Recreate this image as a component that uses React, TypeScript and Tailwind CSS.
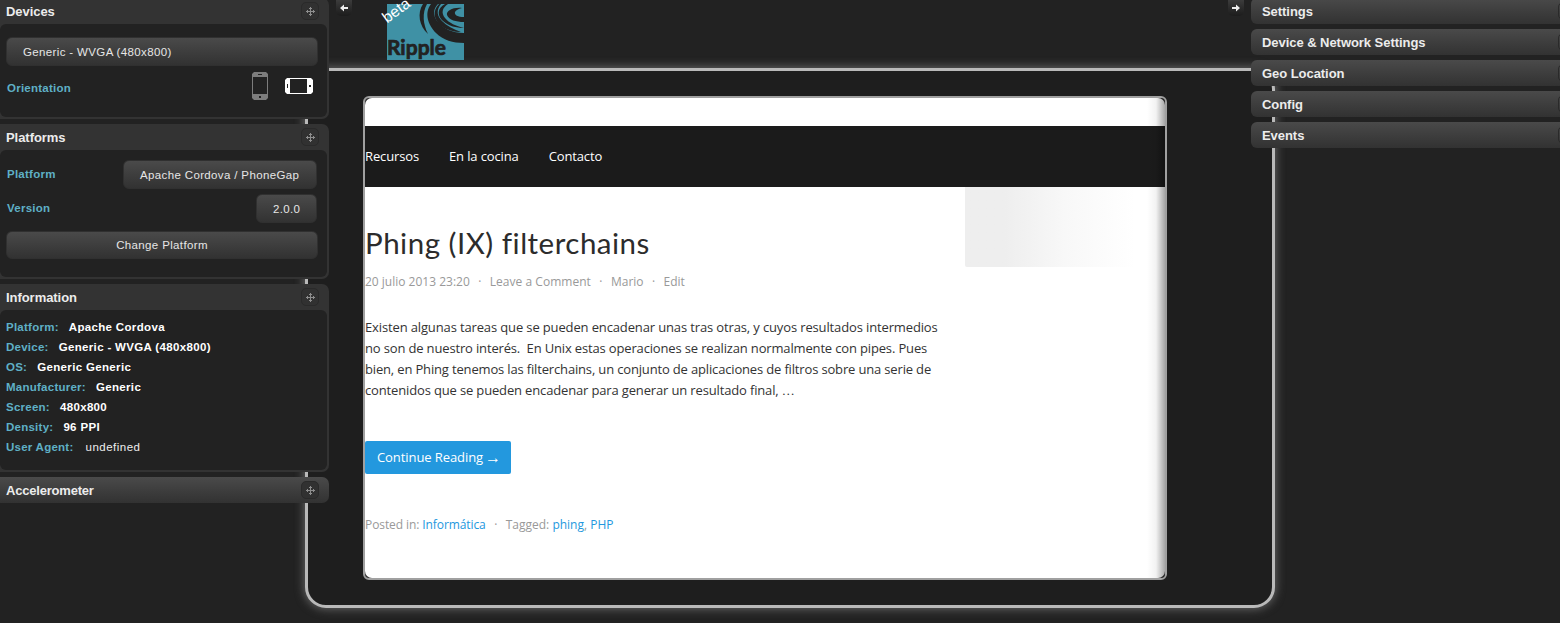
import React from "react";

const sans = "font-['Liberation_Sans',Arial,sans-serif]";

function MoveIcon() {
  return (
    <span className="flex h-[18px] w-[18px] items-center justify-center rounded-[5px] border border-[#2a2a2a] bg-[#313131]">
      <svg width="10" height="10" viewBox="0 0 10 10" fill="#8e8e8e" shapeRendering="crispEdges">
        <path d="M5 1h1v9H5zM1 5h9v1H1zM4 2h3v1H4zM4 8h3v1H4zM2 4h1v3H2zM8 4h1v3H8z" />
      </svg>
    </span>
  );
}

const heading = "pt-[2px] text-[13px] leading-[20px] font-bold tracking-[-0.05px] text-[#ececec]";

function Panel({ title, height, children }: { title: string; height: string; children: React.ReactNode }) {
  return (
    <section className={`flex w-[329px] flex-col rounded-r-[7px] bg-[#333333] pr-[2px] pb-[2px] ${height}`}>
      <header className="flex h-[26px] shrink-0 items-center justify-between pr-[8px] pl-[6px]">
        <h2 className={heading}>{title}</h2>
        <MoveIcon />
      </header>
      <div className="grow rounded-[6px] bg-[#222222]">{children}</div>
    </section>
  );
}

const button =
  "flex items-center rounded-[6px] border border-[#303030] bg-linear-to-b from-[#4a4a4a] to-[#323232] pt-[2px] text-[11.5px] text-[#e6e6e6] tracking-[0.36px] whitespace-nowrap";
const label = "text-[11.5px] font-bold text-[#5fb0c6] tracking-[0.25px]";

const info = [
  ["Platform:", "Apache Cordova"],
  ["Device:", "Generic - WVGA (480x800)"],
  ["OS:", "Generic Generic"],
  ["Manufacturer:", "Generic"],
  ["Screen:", "480x800"],
  ["Density:", "96 PPI"],
];

function LeftSidebar() {
  return (
    <aside className="z-10 col-start-1 row-start-1 -mt-[2px] flex flex-col gap-[5px]">
      <Panel title="Devices" height="h-[121px]">
        <div className="flex flex-col px-[6px] pt-[13px]">
          <div className={`${button} h-[29px] w-[312px] pl-4`}>Generic - WVGA (480x800)</div>
          <div className="flex h-[40px] w-[310px] items-center pl-px">
            <span className={`${label} grow pt-[5px] tracking-[0.18px]`}>Orientation</span>
            <svg width="16" height="28" viewBox="0 0 16 28">
              <path fill="#7d7d7d" fillRule="evenodd" d="M2 0h12l2 2v24l-2 2H2l-2-2V2zM1 5v17h14V5zM6 2v1h4V2zM7 24v2h2v-2z" />
            </svg>
            <svg className="mr-[3px] ml-[17px]" width="28" height="16" viewBox="0 0 28 16">
              <path fill="#fff" fillRule="evenodd" d="M2 0h24l2 2v12l-2 2H2l-2-2V2zM5 1v14h17V1zM2 6v4h1V6zM24 7v2h2V7z" />
            </svg>
          </div>
        </div>
      </Panel>
      <Panel title="Platforms" height="h-[155px]">
        <div className="flex flex-col px-[6px] pt-[10px]">
          <div className="flex h-[29px] w-[311px] items-center justify-between pl-px">
            <span className={label}>Platform</span>
            <div className={`${button} h-[29px] w-[194px] pl-4`}>Apache Cordova / PhoneGap</div>
          </div>
          <div className="mt-[5px] flex h-[29px] w-[311px] items-center justify-between pl-px">
            <span className={label}>Version</span>
            <div className={`${button} h-[29px] w-[61px] pl-4`}>2.0.0</div>
          </div>
          <button className={`${button} mt-[8px] h-[28px] w-[312px] justify-center`}>Change Platform</button>
        </div>
      </Panel>
      <Panel title="Information" height="h-[188px]">
        <dl className="flex flex-col pt-[8px] pl-[6px]">
          {info.map(([k, v]) => (
            <div key={k} className="flex h-5 items-center gap-[10px]">
              <dt className={label}>{k}</dt>
              <dd className="text-[11.5px] font-bold tracking-[0.34px] text-white">{v}</dd>
            </div>
          ))}
          <div className="flex h-5 items-center gap-[12px]">
            <dt className={label}>User Agent:</dt>
            <dd className="text-[11.5px] tracking-[0.5px] text-[#eeeeee]">undefined</dd>
          </div>
        </dl>
      </Panel>
      <section className="flex h-[26px] w-[329px] items-center justify-between rounded-r-[7px] bg-linear-to-b from-[#4a4a4a] to-[#323232] pr-[10px] pl-[6px]">
        <h2 className="pt-[2px] text-[13px] leading-[20px] font-bold tracking-[-0.2px] text-[#ececec]">Accelerometer</h2>
        <MoveIcon />
      </section>
    </aside>
  );
}

function RightSidebar() {
  return (
    <aside className="z-10 col-start-3 row-start-1 -mt-[2px] flex flex-col gap-[5px]">
      {["Settings", "Device & Network Settings", "Geo Location", "Config", "Events"].map((t) => (
        <section key={t} className="flex h-[26px] items-center justify-between overflow-hidden rounded-l-[6px] bg-linear-to-b from-[#4a4a4a] to-[#323232] pl-[11px]">
          <h2 className={heading}>{t}</h2>
          <span className="-mr-4 h-[18px] w-[18px] rounded-[5px] border border-[#2a2a2a]" />
        </section>
      ))}
    </aside>
  );
}

function Arrow({ flip }: { flip?: boolean }) {
  return (
    <span className="flex h-4 w-4 items-center justify-center rounded-b-[5px] bg-linear-to-b from-[#3c3c3c] to-[#1c1c1c]">
      <svg className={flip ? "rotate-180" : ""} width="8" height="8" viewBox="0 0 8 8" fill="#eee">
        <path d="M0 4l4-3.5v2.5h4v2H4v2.5z" />
      </svg>
    </span>
  );
}

function Logo() {
  return (
    <svg className="mt-1 ml-[35px] overflow-visible" width="77" height="56" viewBox="0 0 77 56">
      <rect width="77" height="56" fill="#3f91a5" />
      <g fill="#222">
        <path d="M36 0C30 9 32 22 41 30C36 20 35 9 40 0Z" />
        <path d="M44 0C37 9 41 21 49 29C56 36 66 39 77 39V29C66 29 56 25 50 17C46 11 46 5 51 0Z" />
        <path d="M52 0C45 7 47 16 54 22C60 26 67 28 74 28C66 25 60 22 55 17C50 12 49 6 54 0Z" />
        <path d="M58 0C50 4 50 12 56 17C62 22 69 24 77 24C69 22 62 19 58 14C54 9 55 4 61 0Z" />
        <path d="M75 4C66 3 59 7 60 11C62 16 69 18 77 18V13C71 13 67 11 68 8C69 6 71 5 75 4Z" />
      </g>
      <text x="0" y="51" fill="#222" stroke="#222" strokeWidth="0.7" strokeLinejoin="round" fontFamily="Lato, sans-serif" fontWeight="700" fontSize="21.5" textLength="59" lengthAdjust="spacingAndGlyphs">Ripple</text>
      <text transform="translate(0 19.5) rotate(-36)" fill="#fff" fontFamily="Liberation Sans, sans-serif" fontSize="15.5">beta</text>
    </svg>
  );
}

const dot = "w-5 text-center";

function Page() {
  return (
    <div className="relative h-[484px] w-[804px] overflow-hidden rounded-[6px] border-2 border-[#a0a0a0] bg-[#333] font-['Open_Sans',sans-serif]">
      <div className="h-full rounded-[7px] bg-white pt-[28px]">
        <nav className="flex h-[61px] items-center gap-[30px] bg-[#1b1b1b] text-[13px] tracking-[-0.13px] text-white">
          <a>Recursos</a>
          <a>En la cocina</a>
          <a>Contacto</a>
        </nav>
        <div className="flex h-[391px]">
          <article className="w-[600px]">
            <h1 className="mt-[36px] h-[40px] font-[Lato,sans-serif] text-[29.5px] leading-[40px] tracking-[0.5px] whitespace-nowrap text-[#2c2c2c]">Phing (IX) filterchains</h1>
            <div className="mt-[9px] flex h-5 items-center text-[12px] text-[#999]">
              <span>20 julio 2013 23:20</span>
              <span className={dot}>·</span>
              <span className="tracking-[0.03px]">Leave a Comment</span>
              <span className={dot}>·</span>
              <span>Mario</span>
              <span className={dot}>·</span>
              <span>Edit</span>
            </div>
            <p className="mt-[25px] text-[13px] leading-[21px] tracking-[-0.135px] whitespace-nowrap text-[#333]">
              Existen algunas tareas que se pueden encadenar unas tras otras, y cuyos resultados intermedios<br />
              <span className="tracking-[-0.155px]">no son de nuestro interés.&nbsp; En Unix estas operaciones se realizan normalmente con pipes. Pues</span><br />
              <span className="tracking-[-0.16px]">bien, en Phing tenemos las filterchains, un conjunto de aplicaciones de filtros sobre una serie de</span><br />
              <span className="tracking-[-0.15px]">contenidos que se pueden encadenar para generar un resultado final, <span className="font-['Liberation_Serif',serif]">…</span></span>
            </p>
            <a className="mt-[40px] flex h-[33px] w-[146px] items-center rounded-[2px] bg-[#2398de] pl-3 text-[13px] tracking-[-0.08px] whitespace-nowrap text-white">
              Continue Reading <span className="ml-[2px] font-['Liberation_Serif',serif] text-[16px] leading-none">→</span>
            </a>
            <div className="mt-[41px] flex h-5 items-center text-[12px] tracking-[-0.09px] text-[#999]">
              <span>Posted in: <a className="text-[#2398de]">Informática</a></span>
              <span className={dot}>·</span>
              <span className="tracking-normal">Tagged: <a className="text-[#2398de]">phing</a>, <a className="text-[#2398de]">PHP</a></span>
            </div>
          </article>
          <div className="h-[80px] w-[200px] rounded-bl-[2px] bg-linear-to-r from-[#eeeeee] from-20% via-[#f8f8f8] via-50% to-white to-85%" />
        </div>
      </div>
      <div className="pointer-events-none absolute inset-y-0 right-0 w-[18px] bg-linear-to-r from-transparent via-black/5 via-50% to-black/35" />
    </div>
  );
}

export default function App() {
  return (
    <div className={`grid h-[623px] w-[1560px] grid-cols-[329px_1fr_309px] overflow-hidden bg-[#222222] ${sans}`}>
      <div className="z-[5] col-start-2 row-start-1 flex h-[66px] items-start justify-between pr-[7px] pl-[7px]">
        <div className="flex items-start">
          <Arrow />
          <Logo />
        </div>
        <Arrow flip />
      </div>
      <main className="col-span-3 col-start-1 row-start-1 mt-[68px] ml-[305px] h-[540px] w-[970px] rounded-[21px] border-[3px] border-[#b9b9b9] bg-[#1e1e1e] pt-[25px] pl-[55px] shadow-[0_0_10px_1px_#666666]">
        <Page />
      </main>
      <LeftSidebar />
      <RightSidebar />
    </div>
  );
}
